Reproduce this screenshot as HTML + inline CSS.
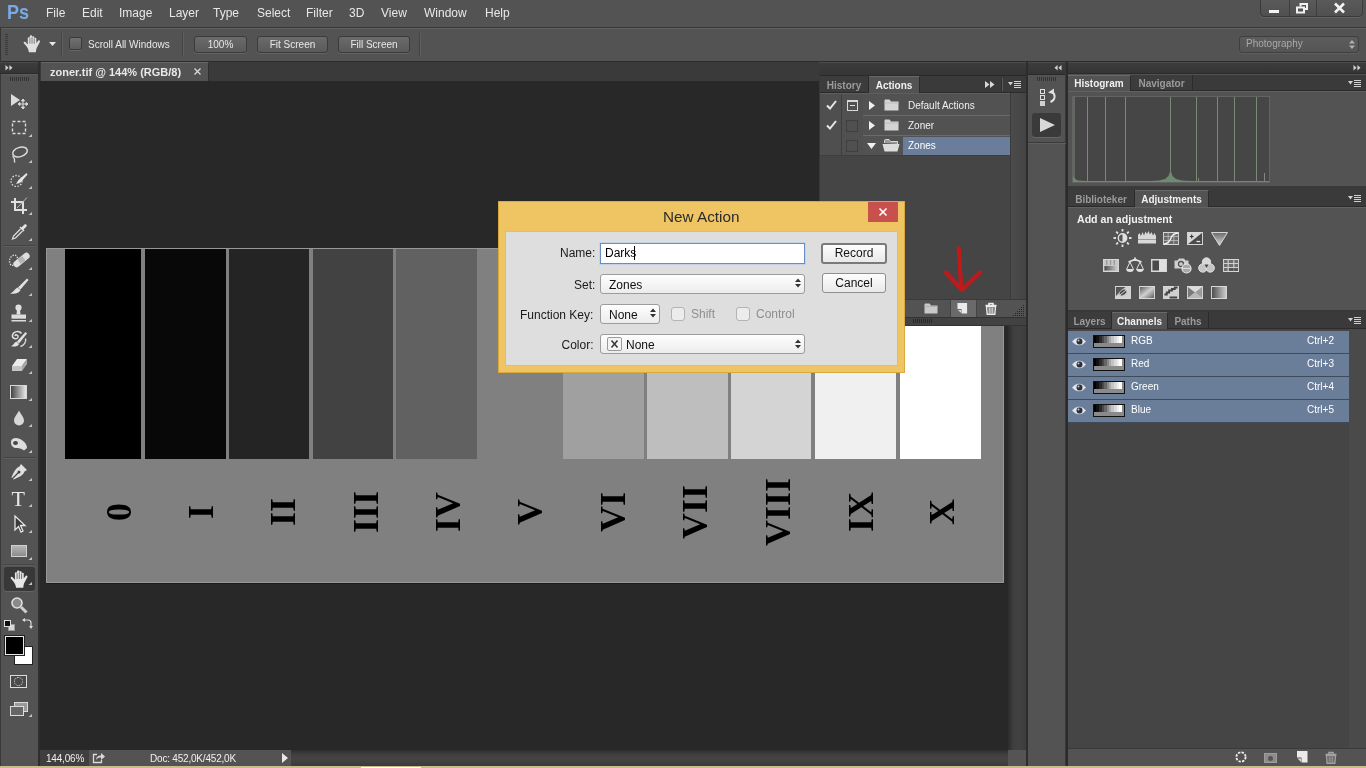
<!DOCTYPE html>
<html><head><meta charset="utf-8"><title>Photoshop</title>
<style>
html,body{margin:0;padding:0;}
body{will-change:transform;width:1366px;height:768px;overflow:hidden;position:relative;background:#535353;font-family:"Liberation Sans",sans-serif;font-size:10px;color:#e6e6e6;}
.a{position:absolute;}
.t{position:absolute;white-space:nowrap;line-height:14px;}
svg{position:absolute;overflow:visible;}
/* menu */
#menubar{left:0;top:0;width:1366px;height:27px;background:#535353;border-bottom:1px solid #383838;}
#menubar .t{top:6px;font-size:12px;color:#e8e8e8;line-height:15px;}
#optbar{left:0;top:28px;width:1366px;height:34px;background:#535353;border-top:1px solid #626262;border-bottom:1px solid #2c2c2c;box-sizing:border-box;}
.obtn{position:absolute;top:36px;height:17px;box-sizing:border-box;border:1px solid #3b3b3b;border-radius:3px;background:linear-gradient(#6a6a6a,#5a5a5a);color:#e8e8e8;text-align:center;line-height:15px;font-size:10px;box-shadow:0 1px 0 #646464;}
.vsep{position:absolute;width:1px;background:#444;box-shadow:1px 0 0 #5f5f5f;}
/* panels */
.hdr{background:linear-gradient(#4a4a4a 0,#4a4a4a 1px,#3c3c3c 1px,#353535 calc(100% - 1px),#2a2a2a calc(100% - 1px));}
.tabrow{background:#3a3a3a;}
.tab{position:absolute;top:0;height:100%;box-sizing:border-box;font-weight:bold;font-size:10px;line-height:18px;color:#9b9b9b;background:#3c3c3c;border-right:1px solid #2b2b2b;text-align:center;}
.tab.on{background:#535353;color:#f0f0f0;border-top:1px solid #686868;line-height:16px;}
.rl{position:absolute;top:512px;font-family:"Liberation Serif",serif;font-weight:bold;font-size:36px;line-height:30px;color:#000;transform:translate(-50%,-50%) rotate(-90deg);white-space:nowrap;}
.dl{font-size:12px;line-height:14px;color:#1a1a1a;}
.dbtn{box-sizing:border-box;border:1px solid #8f8f8f;border-radius:3px;background:linear-gradient(#fdfdfd,#e9e9e9);text-align:center;font-size:12px;line-height:18px;color:#111;}
.dsel{box-sizing:border-box;border:1px solid #9c9c9c;border-radius:3px;background:linear-gradient(#fefefe,#ececec);font-size:12px;color:#111;}
.dsel span{position:absolute;left:8px;top:3px;line-height:14px;}
.dchk{width:14px;height:14px;box-sizing:border-box;border:1px solid #b4b4b4;border-radius:3px;background:#ececec;}
</style></head><body>

<!-- MENUBAR -->
<div id="menubar" class="a">
<span class="t" style="left:7px;top:0px;font-size:21px;line-height:24px;font-weight:bold;color:#79aae6;transform:scaleX(0.86);transform-origin:0 0;">Ps</span>
<span class="t" style="left:46px">File</span>
<span class="t" style="left:82px">Edit</span>
<span class="t" style="left:119px">Image</span>
<span class="t" style="left:169px">Layer</span>
<span class="t" style="left:213px">Type</span>
<span class="t" style="left:257px">Select</span>
<span class="t" style="left:306px">Filter</span>
<span class="t" style="left:349px">3D</span>
<span class="t" style="left:381px">View</span>
<span class="t" style="left:424px">Window</span>
<span class="t" style="left:485px">Help</span>
</div>

<!-- OPTIONS BAR -->
<div id="optbar" class="a"></div>
<!-- window controls -->
<div class="a" style="left:1260px;top:-1px;width:103px;height:18px;box-sizing:border-box;border:1px solid #3a3a3a;border-radius:0 0 4px 4px;background:linear-gradient(#5a5a5a,#505050);box-shadow:0 1px 0 #626262;"></div>
<div class="a" style="left:1289px;top:0;width:1px;height:17px;background:#3e3e3e;"></div>
<div class="a" style="left:1316px;top:0;width:1px;height:17px;background:#3e3e3e;"></div>
<div class="a" style="left:1269px;top:10px;width:10px;height:3px;background:#f2f2f2;"></div>
<svg style="left:1296px;top:3px" width="12" height="11" viewBox="0 0 12 11"><path d="M4.5 3.5V1h6.5v5H9" fill="none" stroke="#f2f2f2" stroke-width="2"/><rect x="1" y="4.5" width="7" height="5" fill="none" stroke="#f2f2f2" stroke-width="2"/></svg>
<svg style="left:1334px;top:3px" width="11" height="10" viewBox="0 0 11 10"><path d="M1 0.5L10 9.5M10 0.5L1 9.5" stroke="#f2f2f2" stroke-width="2.6"/></svg>

<!-- options bar content -->
<div class="a" style="left:5px;top:34px;width:3px;height:21px;background:repeating-linear-gradient(#3a3a3a 0 1px,transparent 1px 2px);"></div>
<svg id="handopt" style="left:21px;top:34px" width="23.400" height="23.400" viewBox="0 0 18 18"><path d="M4.2 9.5L2.2 7.2C1.5 6.4 2.6 5.4 3.4 6.2L5.2 8V3.2C5.2 2.2 6.8 2.2 6.8 3.2V1.8C6.8 0.8 8.5 0.8 8.5 1.8V2.4C8.5 1.5 10.2 1.5 10.2 2.4V3.4C10.2 2.6 11.8 2.6 11.8 3.4V7L13.2 5.2C13.9 4.4 15 5.2 14.5 6.1L12.2 10.5C11.8 11.6 11.5 12.5 11.5 14H6C6 12.3 5 10.5 4.2 9.5Z" fill="#e0e0e0"/><path d="M6.8 3.2V7.5M8.5 2.4V7.5M10.2 3.4V7.5" stroke="#777" stroke-width="0.7"/></svg>
<svg style="left:49px;top:42px" width="7" height="4" viewBox="0 0 7 4"><path d="M0 0H7L3.5 4Z" fill="#e8e8e8"/></svg>
<div class="vsep" style="left:61px;top:33px;height:23px;"></div>
<div class="a" style="left:69px;top:37px;width:13px;height:13px;box-sizing:border-box;border:1px solid #3a3a3a;border-radius:2px;background:linear-gradient(#707070,#5c5c5c);box-shadow:0 1px 0 #666;"></div>
<span class="t" style="left:88px;top:38px;font-size:10px;color:#e8e8e8;">Scroll All Windows</span>
<div class="vsep" style="left:182px;top:33px;height:23px;"></div>
<div class="obtn" style="left:194px;width:53px;">100%</div>
<div class="obtn" style="left:257px;width:71px;">Fit Screen</div>
<div class="obtn" style="left:338px;width:72px;">Fill Screen</div>
<div class="vsep" style="left:419px;top:33px;height:23px;"></div>
<div class="a" style="left:1239px;top:36px;width:120px;height:17px;box-sizing:border-box;border:1px solid #3f3f3f;border-radius:3px;background:linear-gradient(#5c5c5c,#555);box-shadow:0 1px 0 #5f5f5f;"></div>
<span class="t" style="left:1246px;top:37px;font-size:10px;color:#a9a9a9;">Photography</span>
<svg style="left:1349px;top:40px" width="6" height="9" viewBox="0 0 6 9"><path d="M0 3.5L3 0L6 3.5ZM0 5.5L3 9L6 5.5Z" fill="#b0b0b0"/></svg>

<!-- TOOLS -->
<div id="tools" class="a" style="left:0;top:62px;width:40px;height:706px;background:#535353;border-right:2px solid #2e2e2e;box-sizing:border-box;border-left:1px solid #3a3a3a;"></div>
<div class="a hdr" style="left:0;top:62px;width:38px;height:12px;"></div>
<div class="a" style="left:1px;top:74px;width:37px;height:1px;background:#5c5c5c;"></div>
<svg style="left:4.500px;top:65px" width="8" height="5.500" viewBox="0 0 9 7"><path d="M0 0L4 3.5L0 7ZM5 0L9 3.5L5 7Z" fill="#d0d0d0"/></svg>
<div class="a" style="left:10px;top:77px;width:19px;height:4px;background:repeating-linear-gradient(90deg,#333 0 1px,transparent 1px 2px);"></div>
<div class="a" style="left:3px;top:245px;width:32px;height:1px;background:#444;box-shadow:0 1px 0 #5e5e5e;"></div>
<div class="a" style="left:3px;top:457px;width:32px;height:1px;background:#444;box-shadow:0 1px 0 #5e5e5e;"></div>
<div class="a" style="left:3px;top:564px;width:32px;height:1px;background:#444;box-shadow:0 1px 0 #5e5e5e;"></div>
<div id="toolicons" class="a" style="left:0;top:1px;width:38px;height:700px;">
<svg style="left:9px;top:91px" width="20" height="20" viewBox="0 0 20 20"><path d="M2 2L2 14L11 8Z" fill="#dcdcdc"/><path d="M14 8V16M10 12H18M14 7L12.5 9H15.5ZM14 17L12.5 15H15.5ZM9 12L11 10.5V13.5ZM19 12L17 10.5V13.5Z" stroke="#dcdcdc" stroke-width="1" fill="#dcdcdc"/></svg>
<svg style="left:9px;top:117px" width="20" height="20" viewBox="0 0 20 20"><rect x="3.5" y="3.5" width="13" height="12" fill="none" stroke="#dcdcdc" stroke-width="1.4" stroke-dasharray="3 2"/></svg>
<svg style="left:28px;top:133px" width="4" height="3" viewBox="0 0 4 3"><path d="M4 0V3H0.500Z" fill="#c4c4c4"/></svg>
<svg style="left:9px;top:143px" width="20" height="20" viewBox="0 0 20 20"><ellipse cx="11" cy="8" rx="7.5" ry="4.6" transform="rotate(-18 11 8)" fill="none" stroke="#dcdcdc" stroke-width="1.5"/><path d="M4.5 11.5C3 12.5 5.5 14 5.5 15.5C5.5 16.5 5 17.5 6 18.5" fill="none" stroke="#dcdcdc" stroke-width="1.3"/></svg>
<svg style="left:28px;top:159px" width="4" height="3" viewBox="0 0 4 3"><path d="M4 0V3H0.500Z" fill="#c4c4c4"/></svg>
<svg style="left:9px;top:169px" width="20" height="20" viewBox="0 0 20 20"><circle cx="7.5" cy="11" r="5.5" fill="none" stroke="#dcdcdc" stroke-width="1.3" stroke-dasharray="1.5 1.5"/><path d="M17.5 3L18.5 4.5L12 12C10.5 13.5 8 14 7 13.5C8.5 12.5 8.5 11 9.5 10Z" fill="#e6e6e6"/></svg>
<svg style="left:28px;top:185px" width="4" height="3" viewBox="0 0 4 3"><path d="M4 0V3H0.500Z" fill="#c4c4c4"/></svg>
<svg style="left:9px;top:195px" width="20" height="20" viewBox="0 0 20 20"><path d="M6 2V14H18M2 6H14V18" fill="none" stroke="#e0e0e0" stroke-width="2"/><path d="M18 1.5L8 12" stroke="#bdbdbd" stroke-width="1"/></svg>
<svg style="left:28px;top:211px" width="4" height="3" viewBox="0 0 4 3"><path d="M4 0V3H0.500Z" fill="#c4c4c4"/></svg>
<svg style="left:9px;top:221px" width="20" height="20" viewBox="0 0 20 20"><path d="M15.5 2.5C17 1.5 18.5 3.5 17.5 4.5L14.5 7.5L15.5 8.5L14.5 9.5L10.5 5.5L11.5 4.5L12.5 5.5Z" fill="#e6e6e6"/><path d="M11.5 7L4.5 14L3.5 17L6.5 16L13.5 9" fill="none" stroke="#dcdcdc" stroke-width="1.3"/></svg>
<svg style="left:28px;top:237px" width="4" height="3" viewBox="0 0 4 3"><path d="M4 0V3H0.500Z" fill="#c4c4c4"/></svg>
<svg style="left:7px;top:250px" width="24" height="20" viewBox="0 0 24 20"><rect x="5" y="5.750" width="19" height="6.500" rx="3.200" transform="rotate(-39 14.500 9)" fill="#dedede"/><rect x="11.500" y="6.200" width="6" height="5.600" transform="rotate(-39 14.500 9)" fill="#b4b4b4"/><ellipse cx="6.500" cy="9.200" rx="3.800" ry="5.300" transform="rotate(20 6.500 9.200)" fill="none" stroke="#e6e6e6" stroke-width="1.300" stroke-dasharray="1.300 1.300"/></svg>
<svg style="left:28px;top:266px" width="4" height="3" viewBox="0 0 4 3"><path d="M4 0V3H0.500Z" fill="#c4c4c4"/></svg>
<svg style="left:9px;top:276px" width="20" height="20" viewBox="0 0 20 20"><path d="M18 1.500L19.500 3L11.500 12.500L9 10.500Z" fill="#e2e2e2"/><path d="M8.500 10.500L11.500 13C10.500 16 6 17.500 1 16.500C4.500 15.500 5.500 12 8.500 10.500Z" fill="#e2e2e2"/></svg>
<svg style="left:28px;top:292px" width="4" height="3" viewBox="0 0 4 3"><path d="M4 0V3H0.500Z" fill="#c4c4c4"/></svg>
<svg style="left:9px;top:302px" width="20" height="20" viewBox="0 0 20 20"><circle cx="9.500" cy="4.700" r="3.100" fill="#e0e0e0"/><path d="M8 6.500H11L11.500 11.500H7.500Z" fill="#e0e0e0"/><rect x="2.500" y="11.500" width="14.500" height="4.200" fill="#dcdcdc"/><rect x="2.500" y="17" width="14.500" height="1.500" fill="#dcdcdc"/></svg>
<svg style="left:28px;top:318px" width="4" height="3" viewBox="0 0 4 3"><path d="M4 0V3H0.500Z" fill="#c4c4c4"/></svg>
<svg style="left:9px;top:328px" width="20" height="20" viewBox="0 0 20 20"><path d="M16.500 3L18 4.500L10 14.500L8 12.500Z" fill="#e2e2e2"/><path d="M7.500 12.500L10 15C9 17.500 5.500 18 2 17.300C4.500 16.300 5 13.500 7.500 12.500Z" fill="#e2e2e2"/><path d="M12.500 4.500C10.500 1.500 4.500 2 3.500 6C2.700 9.500 7.500 11 8.800 8.500C9.800 6.300 7 5 5.800 6.800" fill="none" stroke="#e0e0e0" stroke-width="1.500"/><path d="M16.500 9.500C17.500 13 15 16.500 11.500 17.500" fill="none" stroke="#dcdcdc" stroke-width="1.400"/></svg>
<svg style="left:28px;top:344px" width="4" height="3" viewBox="0 0 4 3"><path d="M4 0V3H0.500Z" fill="#c4c4c4"/></svg>
<svg style="left:9px;top:354px" width="20" height="20" viewBox="0 0 20 20"><path d="M8 4H18L13 11H3Z" fill="#ececec"/><path d="M3 11H13V16H3Z" fill="#c4c4c4"/><path d="M13 11L18 4V9L13 16Z" fill="#a8a8a8"/></svg>
<svg style="left:28px;top:370px" width="4" height="3" viewBox="0 0 4 3"><path d="M4 0V3H0.500Z" fill="#c4c4c4"/></svg>
<div class="a" style="left:10px;top:384px;width:17px;height:14px;box-sizing:border-box;border:1px solid #d8d8d8;background:linear-gradient(90deg,#444,#e8e8e8);"></div>
<svg style="left:28px;top:397px" width="4" height="3" viewBox="0 0 4 3"><path d="M4 0V3H0.500Z" fill="#c4c4c4"/></svg>
<svg style="left:9px;top:407px" width="20" height="20" viewBox="0 0 20 20"><path d="M10 2.500C11.500 6 15 9 15 12.500A5 5 0 0 1 5 12.500C5 9 8.500 6 10 2.500Z" fill="#d8d8d8"/></svg>
<svg style="left:28px;top:423px" width="4" height="3" viewBox="0 0 4 3"><path d="M4 0V3H0.500Z" fill="#c4c4c4"/></svg>
<svg style="left:9px;top:433px" width="20" height="20" viewBox="0 0 20 20"><path d="M2 8C2 4 7 3 11 5C15 7 18 10 18 14L15 16.500C13 15 11 14 8 14C4 14 2 12 2 8Z" fill="#dcdcdc"/><ellipse cx="6.500" cy="9" rx="2.500" ry="2" fill="#444"/></svg>
<svg style="left:28px;top:449px" width="4" height="3" viewBox="0 0 4 3"><path d="M4 0V3H0.500Z" fill="#c4c4c4"/></svg>
<svg style="left:9px;top:461px" width="20" height="20" viewBox="0 0 20 20"><path d="M12 2L18 8L15.500 9.500C14.500 12.500 11 15 4.500 17.500L2.500 15.500C5 9 7.500 5.500 10.500 4.500Z" fill="#e0e0e0"/><path d="M3 17L9.500 10.500" stroke="#444" stroke-width="1.2"/><circle cx="10" cy="10" r="1.500" fill="#444"/></svg>
<svg style="left:28px;top:477px" width="4" height="3" viewBox="0 0 4 3"><path d="M4 0V3H0.500Z" fill="#c4c4c4"/></svg>
<span class="t" style="left:11.500px;top:486px;font-family:'Liberation Serif',serif;font-size:22px;line-height:24px;color:#e8e8e8;">T</span>
<svg style="left:28px;top:503px" width="4" height="3" viewBox="0 0 4 3"><path d="M4 0V3H0.500Z" fill="#c4c4c4"/></svg>
<svg style="left:9px;top:513px" width="20" height="20" viewBox="0 0 20 20"><path d="M6 2V16L9.500 12.500L12 18L14 17L11.500 11.500H16Z" fill="#3a3a3a" stroke="#e6e6e6" stroke-width="1.3"/></svg>
<svg style="left:28px;top:529px" width="4" height="3" viewBox="0 0 4 3"><path d="M4 0V3H0.500Z" fill="#c4c4c4"/></svg>
<div class="a" style="left:11px;top:544px;width:16px;height:12px;box-sizing:border-box;border:1px solid #d0d0d0;background:linear-gradient(#b5b5b5,#8c8c8c);"></div>
<svg style="left:28px;top:556px" width="4" height="3" viewBox="0 0 4 3"><path d="M4 0V3H0.500Z" fill="#c4c4c4"/></svg>
<div class="a" style="left:4px;top:566px;width:31px;height:24px;border-radius:3px;background:#383838;box-shadow:0 1px 0 #646464;"></div>
<svg style="left:8px;top:567.500px" width="24" height="24" viewBox="0 0 18 18"><path d="M4.2 9.5L2.2 7.2C1.5 6.4 2.6 5.400 3.400 6.200L5.200 8V3.200C5.200 2.200 6.800 2.200 6.800 3.200V1.800C6.800 0.800 8.500 0.800 8.500 1.800V2.400C8.500 1.500 10.200 1.500 10.200 2.400V3.400C10.200 2.600 11.800 2.600 11.800 3.400V7L13.200 5.200C13.900 4.400 15 5.200 14.500 6.100L12.200 10.500C11.800 11.600 11.500 12.500 11.500 14H6C6 12.300 5 10.500 4.200 9.500Z" fill="#e6e6e6"/><path d="M6.8 3.2V7.500M8.500 2.400V7.500M10.200 3.400V7.500" stroke="#666" stroke-width="0.7"/></svg>
<svg style="left:28px;top:581px" width="4" height="3" viewBox="0 0 4 3"><path d="M4 0V3H0.500Z" fill="#c4c4c4"/></svg>
<svg style="left:9px;top:594px" width="20" height="20" viewBox="0 0 20 20"><circle cx="8" cy="8" r="5" fill="#8a8a8a" stroke="#e0e0e0" stroke-width="1.6"/><path d="M12 12L17.500 17.500" stroke="#d0d0d0" stroke-width="3"/></svg>
<div class="a" style="left:8px;top:623px;width:5px;height:5px;background:#d8d8d8;border:1px solid #9a9a9a;"></div><div class="a" style="left:4px;top:619px;width:5px;height:5px;background:#111;border:1px solid #e0e0e0;"></div>
<svg style="left:22px;top:618px" width="10" height="10" viewBox="0 0 10 10"><path d="M2 1H6C8 1 9 2 9 4V7" fill="none" stroke="#dcdcdc" stroke-width="1.2"/><path d="M0 1L3 -1V3ZM9 10L7 7H11Z" fill="#dcdcdc"/></svg>
<div class="a" style="left:14px;top:645px;width:19px;height:19px;box-sizing:border-box;background:#fff;border:1px solid #222;"></div>
<div class="a" style="left:5px;top:635px;width:19px;height:19px;box-sizing:border-box;background:#000;border:1px solid #e8e8e8;outline:1px solid #222;"></div>
<div class="a" style="left:10px;top:674px;width:17px;height:13px;box-sizing:border-box;border:1px solid #dcdcdc;background:#4a4a4a;"></div>
<div class="a" style="left:14px;top:676px;width:9px;height:9px;box-sizing:border-box;border:1px dotted #dcdcdc;border-radius:50%;"></div>
<div class="a" style="left:14px;top:701px;width:14px;height:10px;box-sizing:border-box;border:1px solid #dcdcdc;background:#9a9a9a;"></div>
<div class="a" style="left:10px;top:705px;width:14px;height:10px;box-sizing:border-box;border:1px solid #dcdcdc;background:#666;"></div>
<svg style="left:28px;top:713px" width="4" height="3" viewBox="0 0 4 3"><path d="M4 0V3H0.500Z" fill="#c4c4c4"/></svg>

</div>
<!-- CANVAS AREA -->
<div id="canvas" class="a" style="left:40px;top:62px;width:986px;height:704px;background:#282828;"></div>
<div class="a" style="left:40px;top:62px;width:986px;height:19px;background:#3a3a3a;"></div>
<div class="a" style="left:41px;top:62px;width:168px;height:19px;background:#535353;border-right:1px solid #2e2e2e;border-top:1px solid #676767;box-sizing:border-box;"></div>
<span class="t" style="left:50px;top:65px;font-weight:bold;font-size:11px;color:#e8e8e8;">zoner.tif @ 144% (RGB/8)</span>
<svg style="left:194px;top:68px" width="7" height="7" viewBox="0 0 7 7"><path d="M0.5 0.500L6.500 6.500M6.500 0.500L0.500 6.500" stroke="#d8d8d8" stroke-width="1.3"/></svg>
<!-- image -->
<div id="img" class="a" style="left:46px;top:248px;width:958px;height:335px;background:#808080;box-sizing:border-box;border:1px solid #989898;box-shadow:0 1px 0 #1c1c1c;"></div>
<div class="a" style="left:65px;top:249px;width:76px;height:210px;background:#000;"></div>
<div class="a" style="left:145px;top:249px;width:81px;height:210px;background:#080808;"></div>
<div class="a" style="left:229px;top:249px;width:80px;height:210px;background:#242424;"></div>
<div class="a" style="left:313px;top:249px;width:80px;height:210px;background:#424242;"></div>
<div class="a" style="left:396px;top:249px;width:81px;height:210px;background:#616161;"></div>
<div class="a" style="left:563px;top:249px;width:81px;height:210px;background:#a0a0a0;"></div>
<div class="a" style="left:647px;top:249px;width:80.5px;height:210px;background:#bebebe;"></div>
<div class="a" style="left:730.5px;top:249px;width:80.5px;height:210px;background:#d4d4d4;"></div>
<div class="a" style="left:815px;top:249px;width:81px;height:210px;background:#f0f0f0;"></div>
<div class="a" style="left:900px;top:249px;width:81px;height:210px;background:#fff;"></div>
<span class="rl" style="left:119px;">0</span>
<span class="rl" style="left:201px;">I</span>
<span class="rl" style="left:283px;">II</span>
<span class="rl" style="left:366px;">III</span>
<span class="rl" style="left:448px;">IV</span>
<span class="rl" style="left:530px;">V</span>
<span class="rl" style="left:613px;">VI</span>
<span class="rl" style="left:695px;">VII</span>
<span class="rl" style="left:778px;">VIII</span>
<span class="rl" style="left:861px;">IX</span>
<span class="rl" style="left:942px;">X</span>

<!-- ACTIONS PANEL -->
<div class="a" style="left:819px;top:62px;width:208px;height:264px;background:#454545;"></div>
<div class="a hdr" style="left:819px;top:62px;width:208px;height:14px;"></div>
<div class="a" style="left:820px;top:93px;width:206px;height:1px;background:#5e5e5e;"></div>
<div class="a" style="left:819px;top:75px;width:1px;height:251px;background:#383838;"></div>
<div class="a" style="left:1026px;top:62px;width:2px;height:706px;background:#2d2d2d;"></div>
<div class="a tabrow" style="left:820px;top:76px;width:206px;height:17px;border-bottom:1px solid #2b2b2b;box-sizing:border-box;">
<div class="tab" style="left:0;width:49px;padding-top:0.500px;">History</div>
<div class="tab on" style="left:49px;width:51px;height:17px;padding-top:0.500px;">Actions</div>
</div>
<svg style="left:985px;top:81px" width="10" height="7" viewBox="0 0 10 7"><path d="M0 0L4.500 3.500L0 7ZM5 0L9.500 3.500L5 7Z" fill="#d8d8d8"/></svg>
<div class="a" style="left:1001px;top:78px;width:1px;height:13px;background:#2e2e2e;box-shadow:1px 0 0 #5a5a5a;"></div>
<svg style="left:1009px;top:81px" width="12" height="7" viewBox="0 0 12 7"><path d="M-1 1H4L1.500 4.500Z" fill="#d0d0d0"/><path d="M5 0.500H12M5 2.500H12M5 4.500H12M5 6.500H12" stroke="#d0d0d0" stroke-width="1"/></svg>

<div class="a" style="left:1010px;top:93px;width:16px;height:206px;background:linear-gradient(90deg,#3a3a3a 0 1px,#4b4b4b 1px,#444 100%);"></div>
<div class="a" style="left:820px;top:94px;width:190px;height:61px;background:#525252;"></div>
<div class="a" style="left:820px;top:94px;width:21px;height:61px;background:#4f4f4f;border-right:1px solid #3e3e3e;"></div>
<div class="a" style="left:842px;top:94px;width:21px;height:61px;background:#505050;"></div>
<div class="a" style="left:863px;top:115px;width:147px;height:1px;background:#6a6a6a;"></div>
<div class="a" style="left:863px;top:135px;width:147px;height:1px;background:#6a6a6a;"></div>
<div class="a" style="left:903px;top:137px;width:107px;height:18px;background:#6a7e9b;"></div>
<div class="a" style="left:820px;top:155px;width:190px;height:1px;background:#3e3e3e;"></div>
<svg style="left:826px;top:100px" width="11" height="10" viewBox="0 0 11 10"><path d="M1 5.500L4 8.500L10 1" fill="none" stroke="#e8e8e8" stroke-width="2"/></svg>
<svg style="left:826px;top:120px" width="11" height="10" viewBox="0 0 11 10"><path d="M1 5.500L4 8.500L10 1" fill="none" stroke="#e8e8e8" stroke-width="2"/></svg>
<div class="a" style="left:847px;top:100px;width:11px;height:11px;box-sizing:border-box;border:1px solid #d8d8d8;border-top-width:2px;"></div>
<div class="a" style="left:850px;top:105px;width:5px;height:1px;background:#e0e0e0;"></div>
<div class="a" style="left:846px;top:120px;width:12px;height:12px;box-sizing:border-box;border:1px solid #3f3f3f;background:#505050;"></div>
<div class="a" style="left:846px;top:140px;width:12px;height:12px;box-sizing:border-box;border:1px solid #3f3f3f;background:#505050;"></div>
<svg style="left:869px;top:101px" width="6" height="9" viewBox="0 0 6 9"><path d="M0 0L6 4.500L0 9Z" fill="#f0f0f0"/></svg>
<svg style="left:869px;top:121px" width="6" height="9" viewBox="0 0 6 9"><path d="M0 0L6 4.500L0 9Z" fill="#f0f0f0"/></svg>
<svg style="left:867px;top:143px" width="9" height="6" viewBox="0 0 9 6"><path d="M0 0H9L4.500 6Z" fill="#f0f0f0"/></svg>
<svg style="left:884px;top:99px" width="15" height="12" viewBox="0 0 15 12"><path d="M0.5 1.500C0.500 1 1 0.500 1.500 0.500H5.500L7 2.500H14.500V11.500H0.500Z" fill="#d4d4d4"/><path d="M0.500 4H14.500" stroke="#bcbcbc" stroke-width="1"/></svg>
<svg style="left:884px;top:119px" width="15" height="12" viewBox="0 0 15 12"><path d="M0.5 1.500C0.500 1 1 0.500 1.500 0.500H5.500L7 2.500H14.500V11.500H0.500Z" fill="#d4d4d4"/><path d="M0.500 4H14.500" stroke="#bcbcbc" stroke-width="1"/></svg>

<svg style="left:882px;top:139px" width="18" height="13" viewBox="0 0 18 13"><path d="M2.500 4V1.500C2.500 1 3 0.500 3.500 0.500H7L8.500 2.500H15.500V5" fill="#9a9a9a" stroke="#d4d4d4" stroke-width="1"/><path d="M0.500 5H17.500L15.500 12.500H2.500Z" fill="#dcdcdc"/></svg>
<span class="t" style="left:908px;top:99px;color:#f0f0f0;">Default Actions</span>
<span class="t" style="left:908px;top:119px;color:#f0f0f0;">Zoner</span>
<span class="t" style="left:908px;top:139px;color:#fff;">Zones</span>
<!-- actions bottom bar -->
<div class="a" style="left:820px;top:299px;width:206px;height:18px;background:#535353;border-top:1px solid #3a3a3a;box-sizing:border-box;"></div>
<div class="a" style="left:950px;top:300px;width:27px;height:17px;background:#6a6a6a;border-left:1px solid #444;border-right:1px solid #444;box-sizing:border-box;"></div>
<div class="a" style="left:820px;top:317px;width:206px;height:9px;background:#424242;border-top:1px solid #333;border-bottom:1px solid #333;box-sizing:border-box;"></div>
<div class="a" style="left:913px;top:319px;width:20px;height:4px;background:repeating-linear-gradient(90deg,#2a2a2a 0 1px,transparent 1px 2px);"></div>
<svg style="left:924px;top:303px" width="14" height="11" viewBox="0 0 14 11"><path d="M0.500 1.500C0.500 1 1 0.500 1.500 0.500H5.500L7 2.500H13.500V10.500H0.500Z" fill="#c8c8c8"/><path d="M0.500 3.500H13.500" stroke="#b0b0b0"/></svg>
<svg style="left:957px;top:303px" width="11" height="11" viewBox="0 0 11 12"><path d="M0 0H10.500V11.500H4.500V6.500H0Z" fill="#ebebeb"/><path d="M0.500 7.500L4 11V7.500Z" fill="#dcdcdc"/></svg>
<svg id="trash1" style="left:985px;top:302px" width="12" height="13" viewBox="0 0 12 13"><path d="M0.500 3.500H11.500M4 3V1.500H8V3" fill="none" stroke="#ececec" stroke-width="1.600"/><path d="M1.500 4.500H10.500L9.800 12.300H2.200Z" fill="none" stroke="#ececec" stroke-width="1.400"/><path d="M4.200 5.500V11.500M6 5.500V11.500M7.800 5.500V11.500" stroke="#ececec" stroke-width="1.100"/></svg>
<svg style="left:1013px;top:305px" width="11" height="11" viewBox="0 0 11 11"><g fill="#262626"><rect x="10" y="0" width="1" height="1"/><rect x="8" y="2" width="1" height="1"/><rect x="10" y="2" width="1" height="1"/><rect x="6" y="4" width="1" height="1"/><rect x="8" y="4" width="1" height="1"/><rect x="10" y="4" width="1" height="1"/><rect x="4" y="6" width="1" height="1"/><rect x="6" y="6" width="1" height="1"/><rect x="8" y="6" width="1" height="1"/><rect x="10" y="6" width="1" height="1"/><rect x="2" y="8" width="1" height="1"/><rect x="4" y="8" width="1" height="1"/><rect x="6" y="8" width="1" height="1"/><rect x="8" y="8" width="1" height="1"/><rect x="10" y="8" width="1" height="1"/><rect x="0" y="10" width="1" height="1"/><rect x="2" y="10" width="1" height="1"/><rect x="4" y="10" width="1" height="1"/><rect x="6" y="10" width="1" height="1"/><rect x="8" y="10" width="1" height="1"/><rect x="10" y="10" width="1" height="1"/></g></svg>
<!-- red arrow -->
<svg style="left:935px;top:240px" width="56" height="62" viewBox="0 0 56 62"><path d="M23.800 8.500C24.300 20 25 34 26.500 47" fill="none" stroke="#bd1a1c" stroke-width="4.300" stroke-linecap="round"/><path d="M11 32.500C16 38 22 44.500 27 50C33 44 39 38 45 32.500" fill="none" stroke="#bd1a1c" stroke-width="4.300" stroke-linecap="round" stroke-linejoin="round"/></svg>

<!-- ICON COLUMN -->
<div class="a" style="left:1028px;top:62px;width:38px;height:706px;background:#535353;"></div>
<div class="a hdr" style="left:1028px;top:62px;width:38px;height:13px;"></div>
<div class="a" style="left:1065px;top:62px;width:3px;height:706px;background:linear-gradient(90deg,#444,#2b2b2b 34%,#2b2b2b);"></div>
<svg style="left:1054px;top:65px" width="8" height="5.500" viewBox="0 0 9 7"><path d="M4 0L0 3.500L4 7ZM9 0L5 3.500L9 7Z" fill="#d0d0d0"/></svg>
<div class="a" style="left:1037px;top:77px;width:19px;height:4px;background:repeating-linear-gradient(90deg,#333 0 1px,transparent 1px 2px);"></div>
<svg style="left:1040px;top:88px" width="18" height="19" viewBox="0 0 18 19"><rect x="0.500" y="1.500" width="4" height="4" fill="none" stroke="#e0e0e0"/><rect x="0.500" y="7.500" width="4" height="4" fill="none" stroke="#e0e0e0"/><rect x="0" y="13" width="5" height="5" fill="#d0d0d0"/><path d="M10.500 14C15.500 12 16 6.500 12 3.500" fill="none" stroke="#e0e0e0" stroke-width="1.900"/><path d="M8 4.500L14 0.500L14 6.500Z" fill="#e0e0e0"/></svg>
<div class="a" style="left:1032px;top:113px;width:29px;height:24px;border-radius:3px;background:#3a3a3a;box-shadow:0 1px 0 #666;"></div>
<svg style="left:1040px;top:118px" width="15" height="14" viewBox="0 0 15 14"><path d="M0 0L15 7L0 14Z" fill="#d8d8d8"/></svg>
<div class="a" style="left:1028px;top:142px;width:38px;height:1px;background:#3a3a3a;box-shadow:0 1px 0 #606060;"></div>

<!-- RIGHT PANELS -->
<div class="a" style="left:1068px;top:62px;width:298px;height:706px;background:#535353;"></div>
<div class="a hdr" style="left:1068px;top:62px;width:298px;height:12px;"></div>
<div class="a" style="left:1068px;top:74px;width:298px;height:1px;background:#525252;"></div>
<div class="a" style="left:1068px;top:91px;width:298px;height:1px;background:#626262;"></div>
<div class="a" style="left:1068px;top:207px;width:298px;height:1px;background:#626262;"></div>
<svg style="left:1353px;top:65px" width="8" height="5.500" viewBox="0 0 9 7"><path d="M0 0L4 3.500L0 7ZM5 0L9 3.500L5 7Z" fill="#d0d0d0"/></svg>
<!-- histogram -->
<div class="a tabrow" style="left:1068px;top:75px;width:298px;height:16px;border-bottom:1px solid #2b2b2b;box-sizing:border-box;">
<div class="tab on" style="left:0px;width:63px;height:16px;">Histogram</div>
<div class="tab" style="left:63px;width:62px;height:15px;">Navigator</div>
</div>
<svg style="left:1349px;top:80px" width="12" height="7" viewBox="0 0 12 7"><path d="M-1 1H4L1.500 4.500Z" fill="#d0d0d0"/><path d="M5 0.500H12M5 2.500H12M5 4.500H12M5 6.500H12" stroke="#d0d0d0" stroke-width="1"/></svg>

<div class="a" style="left:1072px;top:96px;width:198px;height:87px;box-sizing:border-box;border:1px solid #636363;background:#464646;"></div>
<svg style="left:1073px;top:97px" width="196" height="85" viewBox="0 0 196 85">
<g stroke="#7b8a78" stroke-width="1"><path d="M1 0V85M14.500 0V85M32.500 0V85M52.500 0V85M97.500 0V85M123.500 0V85M144.500 0V85M161.500 0V85M183.500 0V85M191.500 76V85M125.500 81V85"/></g>
<path d="M0 85V79L2 82L5 83.500L14 84H76L86 83.500L92 82L95.500 79L97.500 73L99.500 79L103 82L109 83.500L120 84H196V85Z" fill="#6f8a6f"/>
</svg>
<div class="a" style="left:1068px;top:186px;width:298px;height:4px;background:#3a3a3a;"></div>
<!-- adjustments -->
<div class="a tabrow" style="left:1068px;top:190px;width:298px;height:17px;border-bottom:1px solid #2b2b2b;box-sizing:border-box;">
<div class="tab" style="left:0px;width:67px;padding-top:1px;">Biblioteker</div>
<div class="tab on" style="left:67px;width:74px;height:17px;padding-top:1px;">Adjustments</div>
</div>
<svg style="left:1349px;top:195px" width="12" height="7" viewBox="0 0 12 7"><path d="M-1 1H4L1.500 4.500Z" fill="#d0d0d0"/><path d="M5 0.500H12M5 2.500H12M5 4.500H12M5 6.500H12" stroke="#d0d0d0" stroke-width="1"/></svg>

<span class="t" style="left:1077px;top:212px;font-weight:bold;font-size:10.600px;color:#f2f2f2;">Add an adjustment</span>
<svg width="0" height="0" style="left:0;top:0"><defs><linearGradient id="gh" x1="0" x2="1" y1="0" y2="0"><stop offset="0" stop-color="#4a4a4a"/><stop offset="1" stop-color="#d0d0d0"/></linearGradient><linearGradient id="gv" x1="0" x2="0" y1="0" y2="1"><stop offset="0" stop-color="#6a6a6a"/><stop offset="1" stop-color="#d8d8d8"/></linearGradient><linearGradient id="gd" x1="0" x2="1" y1="0" y2="1"><stop offset="0" stop-color="#555"/><stop offset="0.500" stop-color="#d0d0d0"/><stop offset="1" stop-color="#555"/></linearGradient></defs></svg>
<svg style="left:1113px;top:228px" width="19" height="20" viewBox="0 0 19 20"><circle cx="9.500" cy="10" r="4.200" fill="none" stroke="#e0e0e0" stroke-width="1.400"/><path d="M9.500 5.800A4.200 4.200 0 0 1 9.500 14.200Z" fill="#e0e0e0"/><g stroke="#e0e0e0" stroke-width="1.800"><path d="M9.500 1V3.500M9.500 16.500V19M0.500 10H3M16 10H18.500M3.200 3.700L5 5.500M14 14.500L15.800 16.300M3.200 16.300L5 14.500M14 5.500L15.800 3.700"/></g></svg>
<svg style="left:1138px;top:231px" width="19" height="13" viewBox="0 0 19 13"><path d="M0 12.500V4L1.500 2L3 5L4.500 1L6 4.500L7.500 0.500L9 3L10.500 0L12 3.500L13.500 1L15 4.500L16.500 2L18 5V12.500Z" fill="#d8d8d8"/><path d="M0 8.500H18" stroke="#8a8a8a" stroke-width="0.800"/></svg>
<svg style="left:1163px;top:232px" width="16" height="13" viewBox="0 0 17 13" preserveAspectRatio="none"><rect x="0.500" y="0.500" width="16" height="12" fill="#6a6a6a" stroke="#d8d8d8"/><path d="M0.500 4.500H16.500M0.500 8.500H16.500M5.500 0.500V12.500M11.500 0.500V12.500" stroke="#c0c0c0" stroke-width="0.800"/><path d="M1 12C7 11.500 8 7 9 5C10 3 12 1.500 16 1" fill="none" stroke="#f0f0f0" stroke-width="1.500"/></svg>
<svg style="left:1187px;top:232px" width="16" height="13" viewBox="0 0 17 13" preserveAspectRatio="none"><rect x="0.500" y="0.500" width="16" height="12" fill="#4a4a4a" stroke="#d8d8d8"/><path d="M0.500 0.500H16.500L0.500 12.500Z" fill="#d8d8d8"/><path d="M3 4.500H7M5 2.500V6.500" stroke="#333" stroke-width="1.200"/><path d="M10 9.500H14" stroke="#e8e8e8" stroke-width="1.300"/></svg>
<svg style="left:1211px;top:232px" width="17" height="14" viewBox="0 0 17 14"><path d="M0.500 0.500H16.500L8.500 13.500Z" fill="url(#gv)" stroke="#d8d8d8" stroke-width="1"/></svg>
<svg style="left:1103px;top:259px" width="16" height="13" viewBox="0 0 17 13" preserveAspectRatio="none"><rect x="0.500" y="0.500" width="16" height="12" fill="#c8c8c8" stroke="#d8d8d8"/><path d="M4 1V6M8 1V6M12 1V6" stroke="#9a9a9a" stroke-width="1.500"/><rect x="1.500" y="7" width="14" height="4.500" fill="url(#gh)"/></svg>
<svg style="left:1126px;top:257px" width="18" height="16" viewBox="0 0 18 16"><path d="M9 0.500V4M2.500 5L9 2.500L15.500 5" fill="none" stroke="#e0e0e0" stroke-width="1.800"/><path d="M4 5L0.500 12.500H7.500ZM14 5L10.500 12.500H17.500Z" fill="none" stroke="#e0e0e0" stroke-width="1"/><path d="M0.500 12.500A3.500 2.500 0 0 0 7.500 12.500ZM10.500 12.500A3.500 2.500 0 0 0 17.500 12.500Z" fill="#e0e0e0"/></svg>
<svg style="left:1151px;top:259px" width="16" height="13" viewBox="0 0 17 13" preserveAspectRatio="none"><rect x="0.500" y="0.500" width="16" height="12" fill="#e0e0e0" stroke="#d8d8d8"/><rect x="1.500" y="1.500" width="7" height="10" fill="#4a4a4a"/></svg>
<svg style="left:1174px;top:257px" width="19" height="17" viewBox="0 0 19 17"><path d="M0.500 3.500H3.500L5 1.500H10L11.500 3.500H14.500V11.500H0.500Z" fill="#d0d0d0"/><circle cx="7" cy="7" r="2.500" fill="none" stroke="#555" stroke-width="1.300"/><circle cx="12.500" cy="11.500" r="4.500" fill="#a8a8a8" stroke="#e8e8e8" stroke-width="1.200"/><path d="M8 11.500H17" stroke="#e8e8e8" stroke-width="0.800"/></svg>
<svg style="left:1198px;top:257px" width="17" height="16" viewBox="0 0 17 16"><circle cx="8.500" cy="5" r="4.200" fill="#d8d8d8" stroke="#ececec" stroke-width="0.800"/><circle cx="4.800" cy="11" r="4.200" fill="#c4c4c4" stroke="#ececec" stroke-width="0.800"/><circle cx="12.200" cy="11" r="4.200" fill="#c4c4c4" stroke="#ececec" stroke-width="0.800"/><path d="M6.500 7.500H10.500L8.500 11Z" fill="#444"/></svg>
<svg style="left:1223px;top:259px" width="16" height="13" viewBox="0 0 17 13" preserveAspectRatio="none"><rect x="0.500" y="0.500" width="16" height="12" fill="#6e6e6e" stroke="#d8d8d8"/><path d="M0.500 4.500H16.500M0.500 8.500H16.500M5.500 0.500V12.500M11.500 0.500V12.500" stroke="#d0d0d0" stroke-width="1.200"/><rect x="6.500" y="9" width="9" height="3" fill="#444" opacity="0.600"/></svg>
<svg style="left:1115px;top:286px" width="16" height="13" viewBox="0 0 17 13" preserveAspectRatio="none"><rect x="0.500" y="0.500" width="16" height="12" fill="#d0d0d0" stroke="#d8d8d8"/><path d="M1 1H11L1 10Z" fill="#555"/><ellipse cx="8.500" cy="6.500" rx="4.500" ry="2.800" transform="rotate(-30 8.500 6.500)" fill="#4a4a4a" stroke="#d8d8d8" stroke-width="0.800"/><path d="M2 11.500L15 1.500" stroke="#d8d8d8" stroke-width="1"/></svg>
<svg style="left:1139px;top:286px" width="16" height="13" viewBox="0 0 17 13" preserveAspectRatio="none"><rect x="0.500" y="0.500" width="16" height="12" fill="url(#gd)" stroke="#d8d8d8"/></svg>
<svg style="left:1163px;top:286px" width="16" height="13" viewBox="0 0 17 13" preserveAspectRatio="none"><rect x="0.500" y="0.500" width="16" height="12" fill="#d0d0d0" stroke="#d8d8d8"/><path d="M1.500 8.500H4V6.500H6.500V4.500H9.500V3H12.500V1.500H15.500M7 11.500H15" fill="none" stroke="#444" stroke-width="2"/></svg>
<svg style="left:1187px;top:286px" width="16" height="13" viewBox="0 0 17 13" preserveAspectRatio="none"><rect x="0.500" y="0.500" width="16" height="12" fill="#dcdcdc" stroke="#d8d8d8"/><path d="M1 1L8.500 6.500L1 12Z" fill="#7a7a7a"/><path d="M16 1L8.500 6.500L16 12Z" fill="#9a9a9a"/><path d="M1 12L8.500 6.500L16 12Z" fill="#b8b8b8"/></svg>
<svg style="left:1211px;top:286px" width="16" height="13" viewBox="0 0 17 13" preserveAspectRatio="none"><rect x="0.500" y="0.500" width="16" height="12" fill="url(#gh)" stroke="#d8d8d8"/></svg>
<div class="a" style="left:1068px;top:310px;width:298px;height:2px;background:#383838;"></div>
<!-- channels -->
<div class="a tabrow" style="left:1068px;top:312px;width:298px;height:17px;border-bottom:1px solid #2b2b2b;box-sizing:border-box;">
<div class="tab" style="left:0px;width:44px;padding-top:1px;">Layers</div>
<div class="tab on" style="left:44px;width:56px;height:17px;padding-top:1px;">Channels</div>
<div class="tab" style="left:100px;width:41px;padding-top:1px;">Paths</div>
</div>
<svg style="left:1349px;top:317px" width="12" height="7" viewBox="0 0 12 7"><path d="M-1 1H4L1.500 4.500Z" fill="#d0d0d0"/><path d="M5 0.500H12M5 2.500H12M5 4.500H12M5 6.500H12" stroke="#d0d0d0" stroke-width="1"/></svg>

<div class="a" style="left:1068px;top:329px;width:298px;height:419px;background:#454545;"></div>
<div class="a" style="left:1349px;top:329px;width:17px;height:419px;background:#4a4a4a;"></div>
<div class="a" style="left:1068px;top:331px;width:281px;height:92px;background:#3f4a5b;"></div>
<div class="a" style="left:1068px;top:331px;width:281px;height:22px;background:#6a7e9a;"></div>
<svg style="left:1072px;top:336px" width="14" height="11" viewBox="0 0 14 11"><path d="M0.500 5.500C3 1 11 1 13.500 5.500C11 10 3 10 0.500 5.500Z" fill="#e4e8ee" stroke="#c8d0da" stroke-width="0.800"/><circle cx="7.500" cy="5.500" r="3" fill="#2c3038"/><circle cx="6.500" cy="4.500" r="1" fill="#c0c8d4"/></svg>
<div class="a" style="left:1093px;top:335px;width:32px;height:13px;box-sizing:border-box;border:1px solid #111;background:linear-gradient(90deg,#000 0 8%,#111 8% 17%,#2a2a2a 17% 25%,#484848 25% 33%,#666 33% 42%,#888 42% 50%,#a8a8a8 50% 58%,#c4c4c4 58% 67%,#dadada 67% 76%,#efefef 76% 85%,#fff 85% 93%,#888 93%);"></div>
<div class="a" style="left:1094px;top:343px;width:30px;height:4px;background:#8a8a8a;"></div>
<span class="t" style="left:1131px;top:334px;color:#fff;">RGB</span>
<span class="t" style="left:1307px;top:334px;color:#fff;">Ctrl+2</span>
<div class="a" style="left:1068px;top:354px;width:281px;height:22px;background:#6a7e9a;"></div>
<svg style="left:1072px;top:359px" width="14" height="11" viewBox="0 0 14 11"><path d="M0.500 5.500C3 1 11 1 13.500 5.500C11 10 3 10 0.500 5.500Z" fill="#e4e8ee" stroke="#c8d0da" stroke-width="0.800"/><circle cx="7.500" cy="5.500" r="3" fill="#2c3038"/><circle cx="6.500" cy="4.500" r="1" fill="#c0c8d4"/></svg>
<div class="a" style="left:1093px;top:358px;width:32px;height:13px;box-sizing:border-box;border:1px solid #111;background:linear-gradient(90deg,#000 0 8%,#111 8% 17%,#2a2a2a 17% 25%,#484848 25% 33%,#666 33% 42%,#888 42% 50%,#a8a8a8 50% 58%,#c4c4c4 58% 67%,#dadada 67% 76%,#efefef 76% 85%,#fff 85% 93%,#888 93%);"></div>
<div class="a" style="left:1094px;top:366px;width:30px;height:4px;background:#8a8a8a;"></div>
<span class="t" style="left:1131px;top:357px;color:#fff;">Red</span>
<span class="t" style="left:1307px;top:357px;color:#fff;">Ctrl+3</span>
<div class="a" style="left:1068px;top:377px;width:281px;height:22px;background:#6a7e9a;"></div>
<svg style="left:1072px;top:382px" width="14" height="11" viewBox="0 0 14 11"><path d="M0.500 5.500C3 1 11 1 13.500 5.500C11 10 3 10 0.500 5.500Z" fill="#e4e8ee" stroke="#c8d0da" stroke-width="0.800"/><circle cx="7.500" cy="5.500" r="3" fill="#2c3038"/><circle cx="6.500" cy="4.500" r="1" fill="#c0c8d4"/></svg>
<div class="a" style="left:1093px;top:381px;width:32px;height:13px;box-sizing:border-box;border:1px solid #111;background:linear-gradient(90deg,#000 0 8%,#111 8% 17%,#2a2a2a 17% 25%,#484848 25% 33%,#666 33% 42%,#888 42% 50%,#a8a8a8 50% 58%,#c4c4c4 58% 67%,#dadada 67% 76%,#efefef 76% 85%,#fff 85% 93%,#888 93%);"></div>
<div class="a" style="left:1094px;top:389px;width:30px;height:4px;background:#8a8a8a;"></div>
<span class="t" style="left:1131px;top:380px;color:#fff;">Green</span>
<span class="t" style="left:1307px;top:380px;color:#fff;">Ctrl+4</span>
<div class="a" style="left:1068px;top:400px;width:281px;height:22px;background:#6a7e9a;"></div>
<svg style="left:1072px;top:405px" width="14" height="11" viewBox="0 0 14 11"><path d="M0.500 5.500C3 1 11 1 13.500 5.500C11 10 3 10 0.500 5.500Z" fill="#e4e8ee" stroke="#c8d0da" stroke-width="0.800"/><circle cx="7.500" cy="5.500" r="3" fill="#2c3038"/><circle cx="6.500" cy="4.500" r="1" fill="#c0c8d4"/></svg>
<div class="a" style="left:1093px;top:404px;width:32px;height:13px;box-sizing:border-box;border:1px solid #111;background:linear-gradient(90deg,#000 0 8%,#111 8% 17%,#2a2a2a 17% 25%,#484848 25% 33%,#666 33% 42%,#888 42% 50%,#a8a8a8 50% 58%,#c4c4c4 58% 67%,#dadada 67% 76%,#efefef 76% 85%,#fff 85% 93%,#888 93%);"></div>
<div class="a" style="left:1094px;top:412px;width:30px;height:4px;background:#8a8a8a;"></div>
<span class="t" style="left:1131px;top:403px;color:#fff;">Blue</span>
<span class="t" style="left:1307px;top:403px;color:#fff;">Ctrl+5</span>
<div class="a" style="left:1068px;top:748px;width:298px;height:18px;background:#535353;border-top:1px solid #3a3a3a;box-sizing:border-box;"></div>
<svg style="left:1235px;top:751px" width="12" height="12" viewBox="0 0 12 12"><circle cx="6" cy="6" r="4.600" fill="none" stroke="#f0f0f0" stroke-width="1.800" stroke-dasharray="2.400 1.210"/></svg>
<div class="a" style="left:1264px;top:753px;width:13px;height:10px;background:#8c8c8c;border:1px solid #9c9c9c;box-sizing:border-box;"></div><div class="a" style="left:1268px;top:755.500px;width:5px;height:5px;border-radius:50%;background:#555;"></div>
<svg style="left:1297px;top:751px" width="11" height="12" viewBox="0 0 11 12"><path d="M0 0H10.500V11.500H4.500V6.500H0Z" fill="#ebebeb"/><path d="M0.500 7.500L4 11V7.500Z" fill="#dcdcdc"/></svg>
<svg style="left:1325px;top:751px" width="12" height="13" viewBox="0 0 12 13"><path d="M0.500 3.500H11.500M4 3V1.500H8V3" fill="none" stroke="#a2a2a2" stroke-width="1.600"/><path d="M1.500 4.500H10.500L9.800 12.300H2.200Z" fill="none" stroke="#a2a2a2" stroke-width="1.400"/><path d="M4.200 5.500V11.500M6 5.500V11.500M7.800 5.500V11.500" stroke="#a2a2a2" stroke-width="1.100"/></svg>

<!-- scrollbars / status -->
<div class="a" style="left:1008px;top:326px;width:18px;height:424px;background:linear-gradient(90deg,#2c2c2c,#3f3f3f 30%,#424242 60%,#3d3d3d);"></div>
<div class="a" style="left:40px;top:750px;width:986px;height:16px;background:linear-gradient(#2c2c2c 0,#3e3e3e 25%,#444 55%,#3b3b3b 100%);"></div>
<div class="a" style="left:40px;top:750px;width:251px;height:16px;background:#535353;"></div>
<div class="a" style="left:40px;top:750px;width:49px;height:16px;background:#3f3f3f;"></div>
<span class="t" style="left:46px;top:752px;font-size:10px;letter-spacing:-0.2px;color:#f0f0f0;">144,06%</span>
<svg style="left:92px;top:752px" width="13" height="12" viewBox="0 0 13 12"><path d="M5 2.500H1.500V10.500H9.500V8" fill="none" stroke="#d8d8d8" stroke-width="1.300"/><path d="M4 8C4 5 6 3.500 9 3.500V1L13 4.500L9 8V5.500C7 5.500 5 6 4 8Z" fill="#d8d8d8"/></svg>
<span class="t" style="left:150px;top:752px;font-size:10px;letter-spacing:-0.2px;color:#f0f0f0;">Doc: 452,0K/452,0K</span>
<svg style="left:282px;top:753px" width="6" height="10" viewBox="0 0 6 10"><path d="M0 0L6 5L0 10Z" fill="#e8e8e8"/></svg>
<div class="a" style="left:1008px;top:750px;width:18px;height:16px;background:#545454;"></div>
<div class="a" style="left:0;top:766px;width:1366px;height:2px;background:#c9bb8c;"></div>
<div class="a" style="left:0;top:28px;width:1px;height:34px;background:#363636;"></div>
<div class="a" style="left:361px;top:767px;width:60px;height:1px;background:#fff;"></div>

<!-- DIALOG -->
<div id="dlg" class="a" style="left:498px;top:201px;width:407px;height:172px;box-sizing:border-box;background:#efc463;border:1px solid #d9a93f;"></div>
<span class="t" style="left:663px;top:208px;font-size:15.300px;line-height:18px;color:#2b2b2b;">New Action</span>
<div class="a" style="left:868px;top:202px;width:30px;height:20px;background:#c8504d;"></div>
<svg style="left:879px;top:208px" width="8" height="8" viewBox="0 0 8 8"><path d="M0.500 0.500L7.500 7.500M7.500 0.500L0.500 7.500" stroke="#fff" stroke-width="1.600"/></svg>
<div class="a" style="left:505px;top:231px;width:393px;height:135px;background:#dedede;box-sizing:border-box;border:1px solid #d0c090;"></div>
<div id="dlgbody" class="a" style="left:0;top:0;font-size:12px;color:#111;">
<span class="t dl" style="left:560px;top:246px;">Name:</span>
<span class="t dl" style="left:574px;top:278px;">Set:</span>
<span class="t dl" style="left:520px;top:307.500px;">Function Key:</span>
<span class="t dl" style="left:561.500px;top:337.500px;">Color:</span>
<div class="a" style="left:600px;top:243px;width:205px;height:21px;box-sizing:border-box;border:1px solid #658fc4;background:#fff;box-shadow:0 0 0 1px #c4d4e8;"></div>
<span class="t dl" style="left:605px;top:246px;color:#000;">Darks</span>
<div class="a" style="left:634px;top:246px;width:1px;height:14px;background:#000;"></div>
<div class="a dbtn" style="left:821px;top:243px;width:66px;height:21px;border:2px solid #7a7a7a;line-height:17px;">Record</div>
<div class="a dbtn" style="left:822px;top:273px;width:64px;height:20px;">Cancel</div>
<div class="a dsel" style="left:600px;top:274px;width:205px;height:20px;"><span>Zones</span></div>
<div class="a dsel" style="left:600px;top:304px;width:60px;height:20px;"><span>None</span></div>
<div class="a dsel" style="left:600px;top:334px;width:205px;height:20px;"><span style="left:25px;">None</span></div>
<div class="a" style="left:607px;top:337px;width:15px;height:14px;box-sizing:border-box;border:1px solid #9a9a9a;border-radius:2px;background:#f4f4f4;"></div>
<svg style="left:611px;top:340px" width="7" height="8" viewBox="0 0 7 8"><path d="M0.500 0.500L6.500 7.500M6.500 0.500L0.500 7.500" stroke="#333" stroke-width="1.500"/></svg>
<div class="a dchk" style="left:671px;top:307px;"></div><span class="t dl" style="left:691px;top:307px;color:#8e8e8e;">Shift</span>
<div class="a dchk" style="left:736px;top:307px;"></div><span class="t dl" style="left:756px;top:307px;color:#8e8e8e;">Control</span>
</div>
<svg style="left:795px;top:278px" width="6" height="10" viewBox="0 0 6 10"><path d="M0 4L3 0.500L6 4ZM0 6L3 9.500L6 6Z" fill="#333"/></svg>
<svg style="left:650px;top:308px" width="6" height="10" viewBox="0 0 6 10"><path d="M0 4L3 0.500L6 4ZM0 6L3 9.500L6 6Z" fill="#333"/></svg>
<svg style="left:795px;top:339px" width="6" height="10" viewBox="0 0 6 10"><path d="M0 4L3 0.500L6 4ZM0 6L3 9.500L6 6Z" fill="#333"/></svg>
</body></html>
